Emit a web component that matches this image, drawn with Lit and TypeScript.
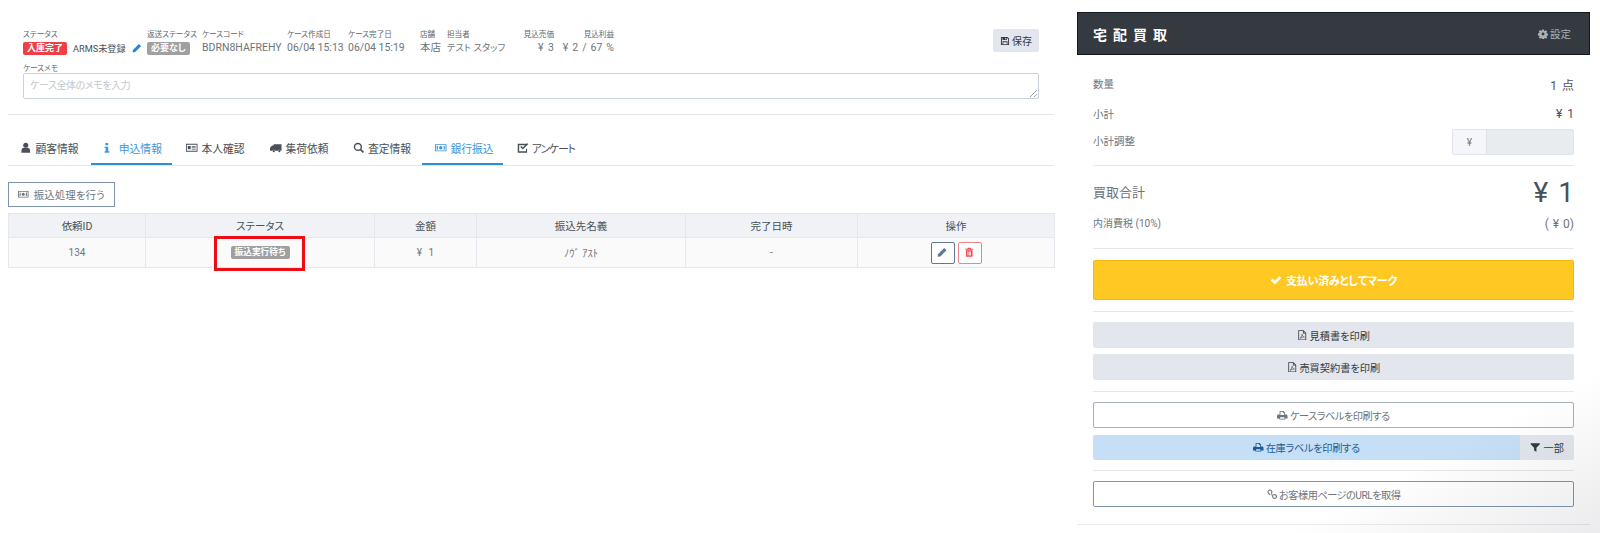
import { LitElement, html, css, svg } from "lit";
import { customElement } from "lit/decorators.js";

const ic = (d: any, vb = "0 0 16 16") => html`<svg class="ic" viewBox=${vb} fill="currentColor">${d}</svg>`;
const user = ic(svg`<circle cx="8" cy="4.5" r="3.5"/><path d="M2 15v-3c0-2.5 1.5-4 3.5-4h5c2 0 3.5 1.5 3.5 4v3z"/>`);
const info = ic(svg`<rect x="6" y="1.5" width="4" height="3"/><path d="M5 6.5h5v6.5h1.5V15h-6.5v-2H6.5V8.5H5z"/>`);
const idcard = ic(svg`<path fill-rule="evenodd" d="M0 2.5h16v11H0zM1.2 3.7v8.6h13.6V3.7z"/><rect x="2.5" y="5.5" width="4" height="4.5"/><rect x="8" y="5.5" width="5.5" height="1"/><rect x="8" y="7.5" width="5.5" height="1"/><rect x="8" y="9.5" width="5.5" height="1"/>`);
const truck = ic(svg`<path d="M5 3h11v9h-1.2a2 2 0 0 0-3.6 0H7a2 2 0 0 0-3.6 0H0V8l3-3h2z"/><circle cx="5.2" cy="12.8" r="1.5"/><circle cx="13" cy="12.8" r="1.5"/>`);
const search = ic(svg`<circle cx="6.8" cy="6.8" r="4.8" fill="none" stroke="currentColor" stroke-width="2"/><path d="M10.2 10.2l4.3 4.3" stroke="currentColor" stroke-width="2.4"/>`);
const money = ic(svg`<path fill-rule="evenodd" d="M0 3h16v10H0zM1.3 4.3v7.4h13.4V4.3z"/><circle cx="8" cy="8" r="2.3"/><rect x="2.4" y="5.4" width="1.6" height="5.2"/><rect x="12" y="5.4" width="1.6" height="5.2"/>`);
const checkSq = ic(svg`<path fill-rule="evenodd" d="M1 2.5h11.5v2H3v8.5h9.5V9.5h1.5V15H1z"/><path d="M4.5 7l1.5-1.5 2 2L14 1.5 15.5 3 8 10.5z"/>`);
const pencil = ic(svg`<path d="M11 1.5l3.5 3.5L5 14.5 1 15l.5-4z"/>`);
const trash = ic(svg`<path fill-rule="evenodd" d="M6 1h4l1 1.5h3V4H2V2.5h3zM3 5h10v10H3zM5.4 7v6h1.2V7zM7.4 7v6h1.2V7zM9.4 7v6h1.2V7z"/>`);
const save = ic(svg`<path fill-rule="evenodd" d="M1.5 1.5H12l2.5 2.5v10.5h-13zM3 3v10h1V8.5h8V13h1V4.6L11.4 3H11v3.5H4V3zM5.2 9.8V13h5.6V9.8zM8.5 3v2.5h1.3V3z"/>`);
const cog = ic(svg`<path fill-rule="evenodd" d="M6.6 1h2.8l.4 2 1.2.5 1.7-1.1 2 2-1.1 1.7.5 1.2 2 .4v2.8l-2 .4-.5 1.2 1.1 1.7-2 2-1.7-1.1-1.2.5-.4 2H6.6l-.4-2-1.2-.5-1.7 1.1-2-2 1.1-1.7-.5-1.2-2-.4V7.2l2-.4.5-1.2-1.1-1.7 2-2 1.7 1.1 1.2-.5zM8 6a2.3 2.3 0 1 0 0 4.6A2.3 2.3 0 0 0 8 6z" transform="translate(0 -.3)"/>`);
const check = ic(svg`<path d="M1 8.5l2.4-2.4 3 3L12.8 2.8 15.2 5.2 6.4 14z"/>`);
const pdf = ic(svg`<path fill-rule="evenodd" d="M2 .5h8l4 4v11H2zM3.2 1.7v12.6h9.6V5.5H9V1.7zM10.2 2.2v2.1h2.1z"/><path d="M4.5 12.8c1.5-1 3-3.8 3.2-6.3.5 2.2 1.5 3.6 3.6 4.3-2-.2-4.5.4-6.8 2z" fill="none" stroke="currentColor" stroke-width=".9"/>`);
const print = ic(svg`<path fill-rule="evenodd" d="M4 1.5h6l2 2V7h2a2 2 0 0 1 2 2v4h-3.5v1.5h-9V13H0V9a2 2 0 0 1 2-2h2zM5.2 2.7V7.5h5.6V4.5H9V2.7zM4.7 11v2.3h6.6V11z"/>`);
const filter = ic(svg`<path d="M1 2h14v1.5L9.8 8.7V15L6.2 13V8.7L1 3.5z"/>`);
const link = ic(svg`<path d="M6.5 6.5a2.8 2.8 0 0 0-4-4 2.8 2.8 0 0 0 0 4l2.5 2.5M9.5 9.5a2.8 2.8 0 0 1 4 4 2.8 2.8 0 0 1-4 0L7 7" fill="none" stroke="currentColor" stroke-width="1.6"/>`);

@customElement("app-root")
export class AppRoot extends LitElement {
  static styles = css`
    :host {
      display: flex;
      position: relative;
      height: 533px;
      overflow: hidden;
      box-sizing: border-box;
      font-family: Roboto, "Noto Sans CJK JP", sans-serif;
      font-feature-settings: "palt";
      color: #6c757d;
      background: #fff;
    }
    .shade {
      position: absolute; inset: 0; pointer-events: none;
      background: linear-gradient(153deg, rgba(0,0,0,0) 0%, rgba(0,0,0,0) 88%, rgba(20,25,40,0.085) 100%);
    }
    .ic { width: 1em; height: 1em; flex: none; }
    .left { width: 1046px; margin-left: 8px; flex: none; }
    .top { padding: 29px 15px 0 15px; }
    .meta { display: flex; justify-content: space-between; align-items: flex-start; }
    .fields {
      margin-top: 1px;
      display: grid;
      grid-template-columns: 124px 55px 85px 61px 72px 27px 74px 33px 60px;
      grid-template-rows: 10px 16px;
      align-items: center;
    }
    .lab { font-size: 7.6px; line-height: 10px; color: #5f666d; white-space: nowrap; }
    .val { font-size: 10.5px; line-height: 16px; color: #6c757d; white-space: nowrap; }
    .val.staff { font-size: 9.4px; }
    .r { text-align: right; }
    .price { word-spacing: 2px; }
    .price.tight { word-spacing: 1.4px; }
    .st { display: flex; align-items: center; gap: 6px; font-size: 9.2px; color: #495057; }
    .pen { color: #2a83d6; font-size: 10px; display: flex; }
    .badge { display: inline-block; font-size: 9px; line-height: 13px; font-weight: 700; color: #fff; padding: 0 4px; border-radius: 2px; }
    .red { background: #ef3f46; }
    .gray { background: #a0a0a0; }
    .savebtn {
      display: flex; align-items: center; justify-content: center; gap: 2px;
      width: 46px; height: 23px; background: #e3e6ec; border-radius: 2px;
      font-size: 10px; color: #343a40;
    }
    .memo-label { margin-top: 8px; }
    .memo {
      margin-top: -1px; height: 26px; box-sizing: border-box; width: 100%;
      border: 1px solid #ccd3df; border-radius: 2px; padding: 0 6px;
      font-size: 10px; letter-spacing: -.4px; line-height: 24px; color: #c4c8cc; position: relative; background: #fff;
    }
    .grip { position: absolute; right: 1px; bottom: 1px; width: 7px; height: 7px; color: #888; }
    .hr0 { height: 1px; background: #e4e7ee; margin-top: 15px; }
    .tabs { display: flex; height: 34px; margin-top: 16px; border-bottom: 1px solid #e4e7ee; }
    .tab {
      display: flex; align-items: center; justify-content: center; gap: 3.5px;
      font-size: 10.8px; color: #495057; height: 34px; box-sizing: border-box; white-space: nowrap;
      border-bottom: 2px solid transparent; padding-top: 1px;
    }
    .tab.on { color: #3d95e0; border-bottom-color: #2a8fdc; }
    .t1 { width: 83px; } .t2 { width: 81px; } .t3 { width: 87px; } .t4 { width: 81px; }
    .t5 { width: 82px; padding-left: 2px; } .t6 { width: 81px; padding-left: 4px; }
    .t7 { width: 82px; justify-content: flex-start; padding-left: 14px; letter-spacing: -1.1px; }
    .tab .ic { font-size: 11.5px; }
    .paybtn {
      display: flex; align-items: center; gap: 5px; margin-top: 16px; height: 25px; box-sizing: border-box;
      width: 107px; justify-content: center;
      border: 1px solid #7f93ae; background: #fff; font-size: 10.5px; color: #6c757d;
    }
    table { border-collapse: collapse; width: 1046px; table-layout: fixed; margin-top: 6px; font-size: 10.5px; }
    th, td { border: 1px solid #e4e7ee; text-align: center; padding: 0; }
    th { height: 23px; background: #f0f2f5; font-weight: 400; color: #495057; font-size: 10.5px; }
    td { height: 29px; background: #fafafa; color: #6c757d; font-size: 10px; }
    td.price { word-spacing: 4px; }
    .statuscell { position: relative; }
    .hl { position: absolute; left: 68px; top: -2px; width: 91px; height: 35px; box-sizing: border-box; border: 3px solid #ee0c14; }
    .td-badge { font-size: 8.7px; line-height: 13px; }
    .kana { font-size: 10.5px; }
    .ops { display: flex; justify-content: center; gap: 3px; }
    .op { width: 24px; height: 22px; box-sizing: border-box; border-radius: 2px; display: flex; align-items: center; justify-content: center; font-size: 10.5px; }
    .op.e { border: 1px solid #5d7898; color: #5d7898; background: #fff; }
    .op.d { border: 1px solid #f08488; color: #ee4a50; background: #fff; }

    .right { width: 513px; margin-left: 23px; flex: none; padding-top: 12px; }
    .phead {
      height: 43px; box-sizing: border-box; background: #343a40; border: 1px solid #15181b;
      display: flex; align-items: center; justify-content: space-between; padding: 0 18px 0 15px;
    }
    .ptitle { font-size: 14px; font-weight: 700; letter-spacing: 6px; color: #fff; }
    .pset { display: flex; align-items: center; gap: 2px; font-size: 10.5px; color: #aab0b6; }
    .pset .ic { font-size: 10px; }
    .pbody { padding: 15px 16px 0 16px; }
    .row { display: flex; justify-content: space-between; align-items: center; }
    .row .k { font-size: 10.5px; color: #6c757d; margin-top: -3px; }
    .row .v { font-size: 12px; color: #495057; word-spacing: 2px; margin-top: -1px; }
    .h30 { height: 30px; } .h29 { height: 29px; }
    .inputg { display: flex; width: 122px; height: 26px; box-sizing: border-box; border: 1px solid #dfe3ea; border-radius: 2px; }
    .yen { width: 33px; background: #f4f6f9; border-right: 1px solid #dfe3ea; display: flex; align-items: center; justify-content: center; font-size: 10px; color: #6c757d; }
    .fill { flex: 1; background: #e9ecef; }
    .hr { height: 1px; background: #e5e7ec; }
    .tot { height: 37px; margin-top: 7px; }
    .row.tot .k { font-size: 13px; margin-top: 0; }
    .row.tot .v { font-size: 28px; font-weight: 400; color: #495057; line-height: 37px; word-spacing: 3px; margin-top: 1px; }
    .tax { height: 26px; margin-top: 1px; }
    .row.tax .k { font-size: 10px; }
    .row.tax .v { font-size: 12px; color: #6c757d; word-spacing: 1px; }
    .btn {
      display: flex; align-items: center; justify-content: center; gap: 2px; box-sizing: border-box;
      height: 26px; border-radius: 2px; font-size: 10.2px;
    }
    .btn .ic { font-size: 10.5px; }
    .yellow { height: 40px; background: #ffc823; border: 1px solid #f5b80f; color: #fff; font-weight: 700; font-size: 11px; gap: 4px; letter-spacing: -.2px; }
    .btn.yellow .ic { font-size: 12px; }
    .soft { background: #e3e6ec; color: #343a40; }
    .out { background: #fff; border: 1px solid #a6afbd; color: #6c757d; letter-spacing: -.5px; }
    .out2 { background: #fff; border: 1px solid #8295ae; color: #6c757d; letter-spacing: -.5px; }
    .split { display: flex; height: 25px; margin-top: 7px; }
    .blue { flex: 1; background: #c5e0f6; color: #1e5b94; border-radius: 2px 0 0 2px; height: 25px; letter-spacing: -.3px; }
    .some { width: 54px; background: #e3e6ec; color: #343a40; border-radius: 0 2px 2px 0; height: 25px; gap: 3px; }
    .bhr { height: 1px; background: #e8eaee; margin-top: 17px; }
    .mt5 { margin-top: 5px; } .mt6 { margin-top: 6px; } .mt9 { margin-top: 9px; }
    .mt10 { margin-top: 10px; } .mt11 { margin-top: 11px; } .mt12 { margin-top: 12px; }
  `;

  render() {
    return html`
      <div class="left">
        <div class="top">
          <div class="meta">
            <div class="fields">
              <div class="lab">ステータス</div><div class="lab">返送ステータス</div><div class="lab">ケースコード</div>
              <div class="lab">ケース作成日</div><div class="lab">ケース完了日</div><div class="lab">店舗</div>
              <div class="lab">担当者</div><div class="lab r">見込売価</div><div class="lab r">見込利益</div>
              <div class="st"><span class="badge red">入庫完了</span><span>ARMS未登録</span><span class="pen">${pencil}</span></div>
              <div class="val"><span class="badge gray">必要なし</span></div>
              <div class="val">BDRN8HAFREHY</div><div class="val">06/04 15:13</div><div class="val">06/04 15:19</div>
              <div class="val">本店</div><div class="val staff">テスト スタッフ</div>
              <div class="val r price">¥ 3</div><div class="val r price tight">¥ 2 / 67 %</div>
            </div>
            <div class="savebtn">${save}<span>保存</span></div>
          </div>
          <div class="lab memo-label">ケースメモ</div>
          <div class="memo">ケース全体のメモを入力
            <svg class="grip" viewBox="0 0 7 7"><path d="M7 0L0 7M7 4L4 7" stroke="currentColor" stroke-width=".8"/></svg>
          </div>
        </div>
        <div class="hr0"></div>
        <div class="tabs">
          <div class="tab t1">${user}<span>顧客情報</span></div>
          <div class="tab t2 on">${info}<span>&nbsp;申込情報</span></div>
          <div class="tab t3">${idcard}<span>本人確認</span></div>
          <div class="tab t4">${truck}<span>集荷依頼</span></div>
          <div class="tab t5">${search}<span>査定情報</span></div>
          <div class="tab t6 on">${money}<span>銀行振込</span></div>
          <div class="tab t7">${checkSq}<span>アンケート</span></div>
        </div>
        <div class="paybtn">${money}<span>振込処理を行う</span></div>
        <table>
          <colgroup>
            <col style="width:137px"/><col style="width:229px"/><col style="width:102px"/>
            <col style="width:209px"/><col style="width:172px"/><col style="width:197px"/>
          </colgroup>
          <tr><th>依頼ID</th><th>ステータス</th><th>金額</th><th>振込先名義</th><th>完了日時</th><th>操作</th></tr>
          <tr>
            <td>134</td>
            <td class="statuscell"><span class="badge gray td-badge">振込実行待ち</span><div class="hl"></div></td>
            <td class="price">¥ 1</td>
            <td class="kana">ﾉｳﾞ ｱｽﾄ</td>
            <td>-</td>
            <td><div class="ops"><div class="op e">${pencil}</div><div class="op d">${trash}</div></div></td>
          </tr>
        </table>
      </div>
      <div class="right">
        <div class="phead"><span class="ptitle">宅配買取</span><span class="pset">${cog}<span>設定</span></span></div>
        <div class="pbody">
          <div class="row h30"><span class="k">数量</span><span class="v">1 点</span></div>
          <div class="row h29"><span class="k">小計</span><span class="v">¥ 1</span></div>
          <div class="row"><span class="k">小計調整</span><div class="inputg"><div class="yen">¥</div><div class="fill"></div></div></div>
          <div class="hr mt10"></div>
          <div class="row tot"><span class="k">買取合計</span><span class="v">¥ 1</span></div>
          <div class="row tax"><span class="k">内消費税 (10%)</span><span class="v">( ¥ 0)</span></div>
          <div class="hr mt11"></div>
          <div class="btn yellow mt11">${check}<span>支払い済みとしてマーク</span></div>
          <div class="hr mt11"></div>
          <div class="btn soft mt10">${pdf}<span>見積書を印刷</span></div>
          <div class="btn soft mt6">${pdf}<span>売買契約書を印刷</span></div>
          <div class="hr mt11"></div>
          <div class="btn out mt10">${print}<span>ケースラベルを印刷する</span></div>
          <div class="split"><div class="btn blue">${print}<span>在庫ラベルを印刷する</span></div><div class="btn some">${filter}<span>一部</span></div></div>
          <div class="hr mt10"></div>
          <div class="btn out2 mt10">${link}<span>お客様用ページのURLを取得</span></div>
        </div>
        <div class="bhr"></div>
      </div>
      <div class="shade"></div>
    `;
  }
}
